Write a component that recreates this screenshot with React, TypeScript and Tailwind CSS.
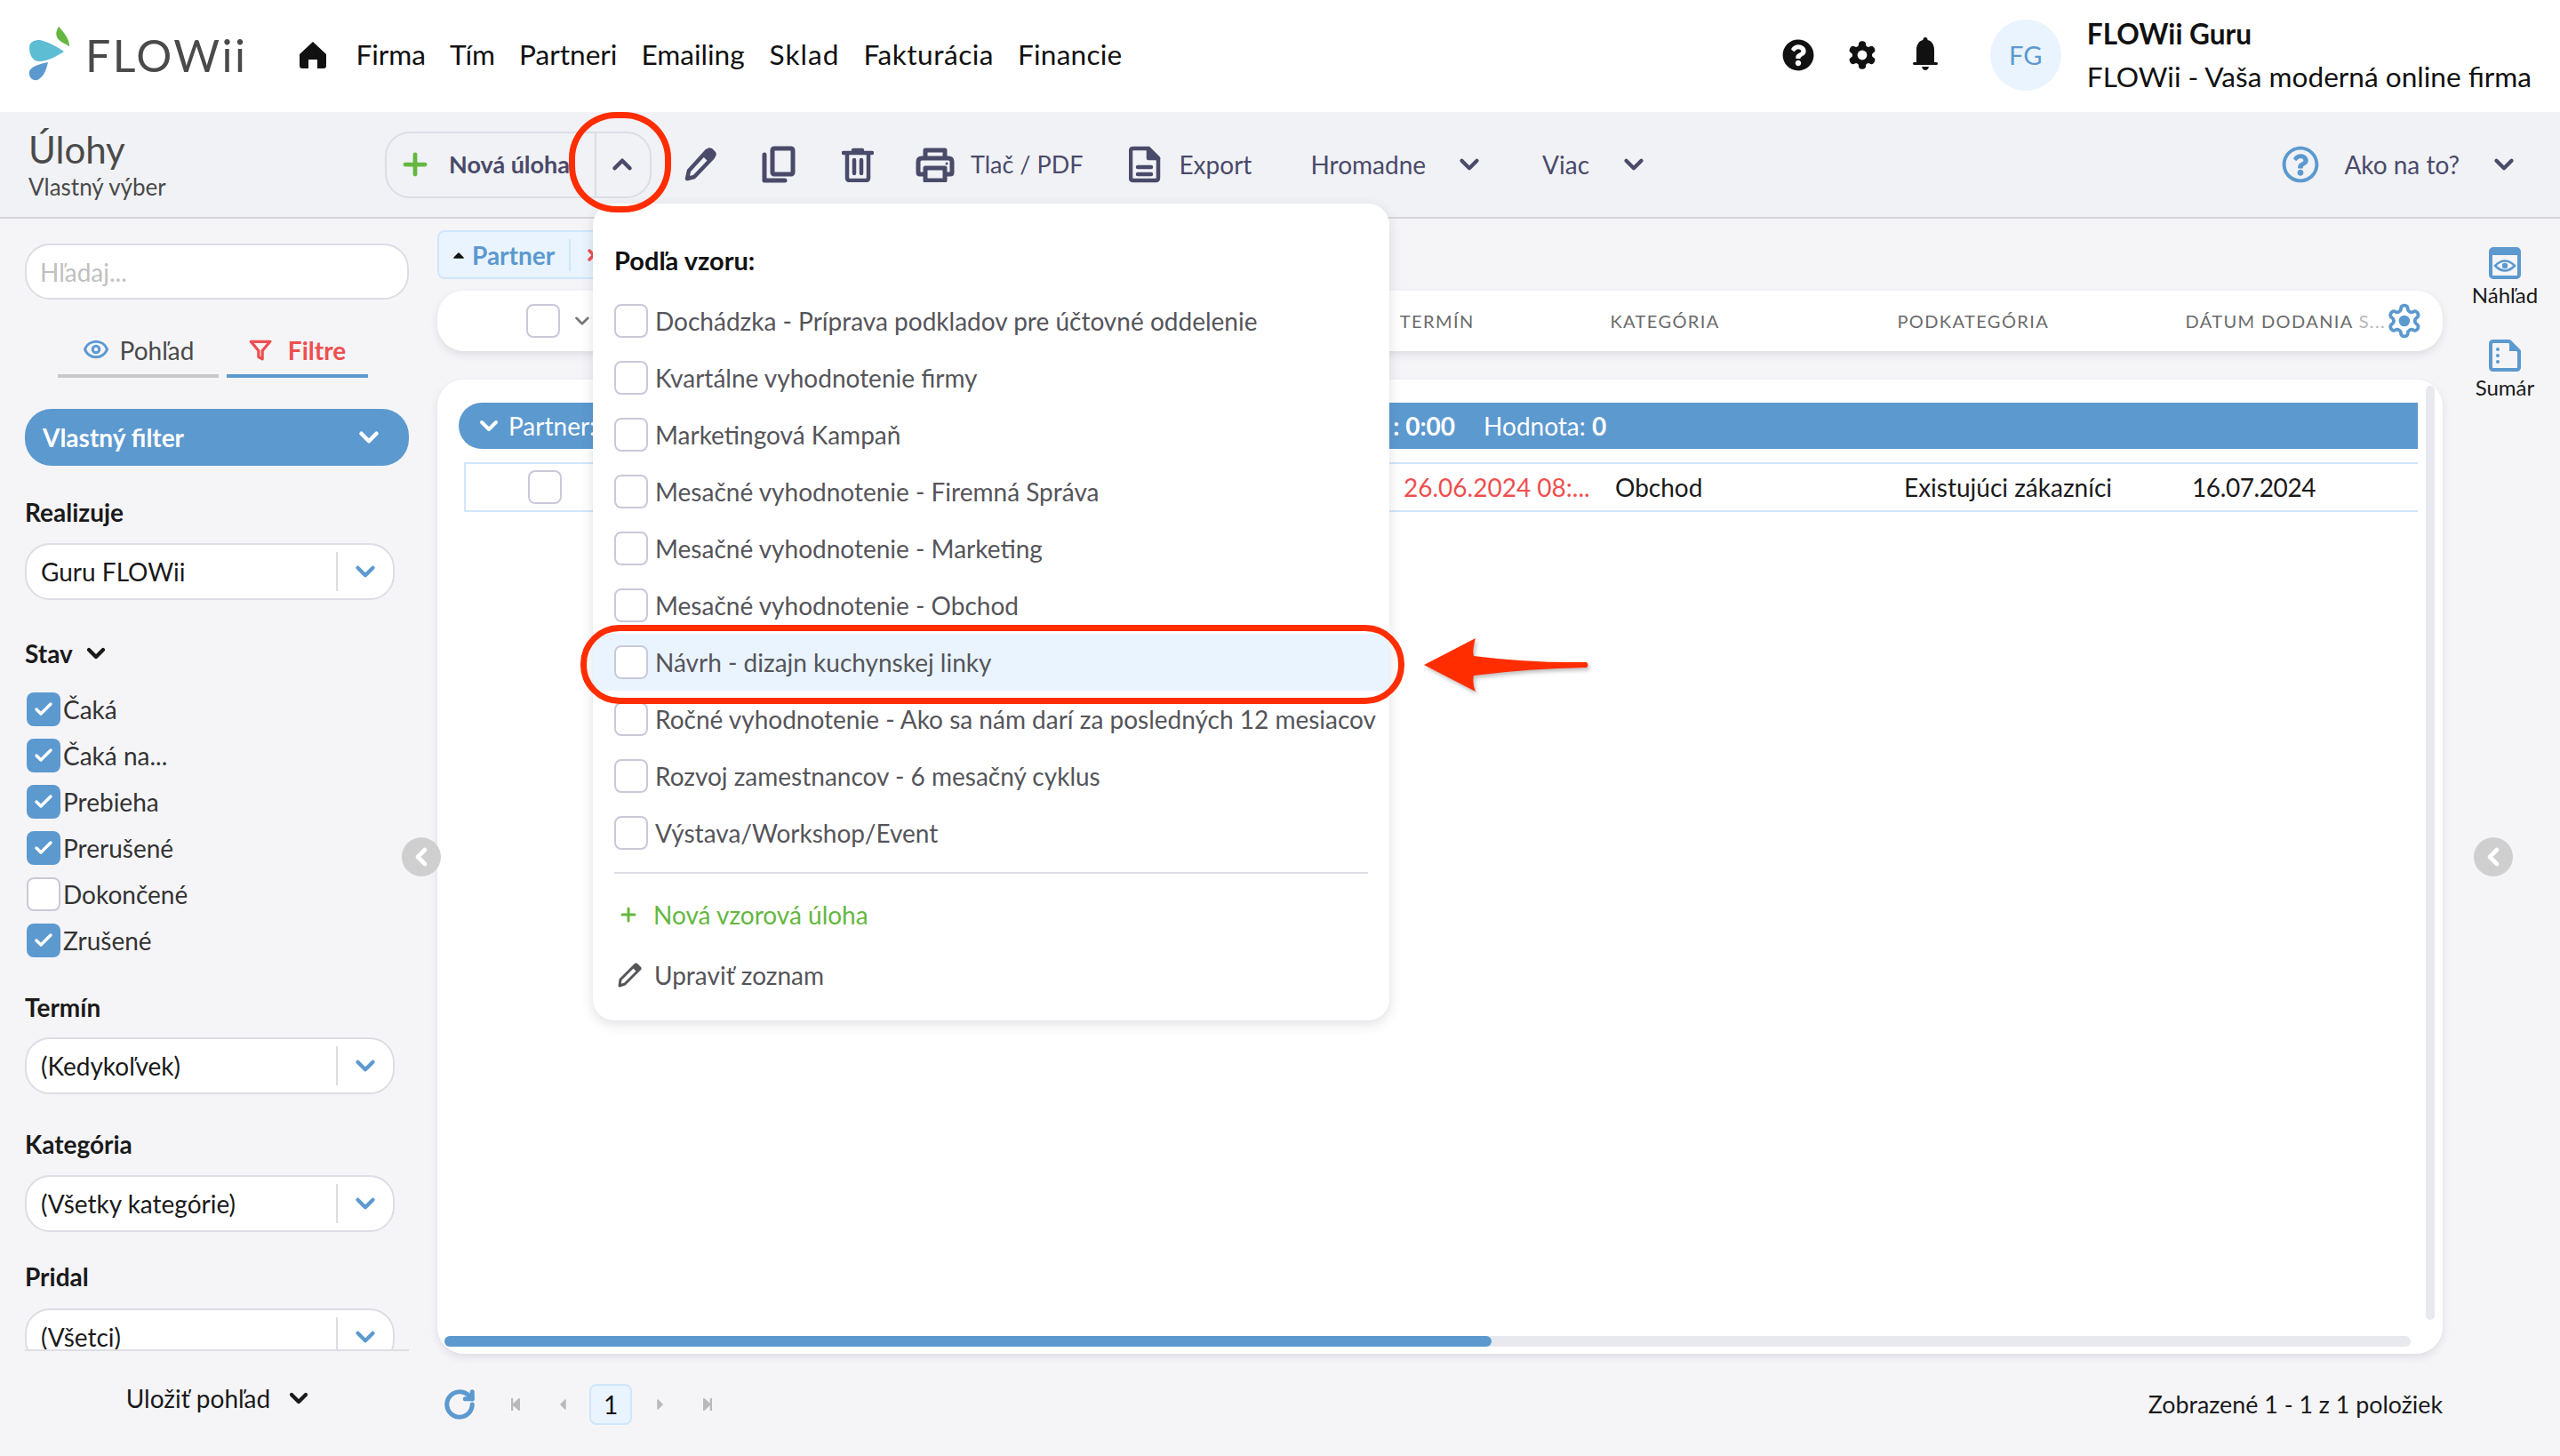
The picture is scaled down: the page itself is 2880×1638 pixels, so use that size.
import { ChevronDown, ChevronUp, ChevronLeft, Plus, Check, Eye, RotateCw } from 'lucide-react';
import { FaQuestionCircle, FaRegQuestionCircle, FaStepBackward, FaCaretLeft, FaCaretRight, FaStepForward, FaCaretUp, FaTimes } from 'react-icons/fa';
import { FiFilter } from 'react-icons/fi';

const statuses = [
  { label: 'Čaká', on: true },
  { label: 'Čaká na...', on: true },
  { label: 'Prebieha', on: true },
  { label: 'Prerušené', on: true },
  { label: 'Dokončené', on: false },
  { label: 'Zrušené', on: true },
];

const templates = [
  'Dochádzka - Príprava podkladov pre účtovné oddelenie',
  'Kvartálne vyhodnotenie firmy',
  'Marketingová Kampaň',
  'Mesačné vyhodnotenie - Firemná Správa',
  'Mesačné vyhodnotenie - Marketing',
  'Mesačné vyhodnotenie - Obchod',
  'Návrh - dizajn kuchynskej linky',
  'Ročné vyhodnotenie - Ako sa nám darí za posledných 12 mesiacov',
  'Rozvoj zamestnancov - 6 mesačný cyklus',
  'Výstava/Workshop/Event',
];

const nav = [
  { label: 'Firma', cls: '' },
  { label: 'Tím', cls: '' },
  { label: 'Partneri', cls: '' },
  { label: 'Emailing', cls: '' },
  { label: 'Sklad', cls: 'tracking-[1px] ml-[1px]' },
  { label: 'Fakturácia', cls: 'tracking-[0.5px]' },
  { label: 'Financie', cls: 'tracking-[0.2px]' },
];

const cogPath =
  'M12.22 2h-.44a2 2 0 0 0-2 2v.18a2 2 0 0 1-1 1.73l-.43.25a2 2 0 0 1-2 0l-.15-.08a2 2 0 0 0-2.73.73l-.22.38a2 2 0 0 0 .73 2.73l.15.1a2 2 0 0 1 1 1.72v.51a2 2 0 0 1-1 1.74l-.15.09a2 2 0 0 0-.73 2.73l.22.38a2 2 0 0 0 2.73.73l.15-.08a2 2 0 0 1 2 0l.43.25a2 2 0 0 1 1 1.73V20a2 2 0 0 0 2 2h.44a2 2 0 0 0 2-2v-.18a2 2 0 0 1 1-1.73l.43-.25a2 2 0 0 1 2 0l.15.08a2 2 0 0 0 2.73-.73l.22-.39a2 2 0 0 0-.73-2.73l-.15-.08a2 2 0 0 1-1-1.74v-.5a2 2 0 0 1 1-1.74l.15-.09a2 2 0 0 0 .73-2.73l-.22-.38a2 2 0 0 0-2.73-.73l-.15.08a2 2 0 0 1-2 0l-.43-.25a2 2 0 0 1-1-1.73V4a2 2 0 0 0-2-2z';

function Logo() {
  return (
    <div className="flex items-center gap-[14px]">
      <svg width="50" height="64" viewBox="0 0 50 64">
        <path d="M34 0C39 5 46 14 46 21C46 23 45 22 43 20C35 17 27 11 34 0Z" fill="#65b741" />
        <path d="M1 24C1 17 6 15 13 15C24 18 33 23 40 28C32 33 22 39 12 39C5 39 1 32 1 24Z" fill="#5dbdd3" />
        <path d="M22 40C20 48 18 56 10 60C3 61 0 56 1 50C4 44 13 42 22 40Z" fill="#5c99cf" />
      </svg>
      <span className="text-[50px] leading-none font-normal tracking-[2.5px] text-[#4a4a4a]">FLOWii</span>
    </div>
  );
}

function Box({ on = false }: { on?: boolean }) {
  if (on) {
    return (
      <span className="flex h-[38px] w-[38px] shrink-0 items-center justify-center rounded-[8px] bg-[#5c99cf]">
        <Check size={24} strokeWidth={3.5} className="text-white" />
      </span>
    );
  }
  return <span className="block h-[38px] w-[38px] shrink-0 rounded-[8px] border-2 border-[#c9c9da] bg-white" />;
}

function Select({ value }: { value: string }) {
  return (
    <div className="flex h-[64px] w-[416px] items-center rounded-[28px] border-2 border-[#dcdde5] bg-white pl-[16px] text-[28px] text-[#1a1a1a]">
      <span className="flex-1">{value}</span>
      <span className="flex h-[44px] w-[64px] items-center justify-center border-l-2 border-[#dcdde5]">
        <ChevronDown size={34} strokeWidth={3} className="text-[#5c99cf]" />
      </span>
    </div>
  );
}

function Label({ children }: { children: string }) {
  return <div className="text-[28px] leading-[32px] font-bold text-[#1a1a1a]">{children}</div>;
}

export default function App() {
  return (
    <div className="relative flex h-[1638px] w-[2880px] flex-col overflow-hidden bg-[#f5f5f8] font-['Lato',sans-serif] text-[#1a1a1a]">
      {/* Header */}
      <header className="flex h-[126px] shrink-0 items-center bg-white pb-[2px] pl-[32px] pr-[32px]">
        <Logo />
        <svg className="ml-[58px]" width="32" height="32" viewBox="0 0 32 32">
          <path d="M16 1L31 15V28Q31 31 28 31H21V21H11V31H4Q1 31 1 28V15Z" fill="#111" />
        </svg>
        <nav className="ml-[32px] flex gap-[27px] text-[31.6px] text-[#111]">
          {nav.map((n) => (
            <span key={n.label} className={n.cls}>{n.label}</span>
          ))}
        </nav>
        <div className="ml-auto flex items-center">
          <FaQuestionCircle size={36} className="text-[#111]" />
          <svg className="ml-[36px]" width="36" height="36" viewBox="0 0 24 24">
            <path d={cogPath} fill="#111" stroke="#111" strokeWidth="1" />
            <circle cx="12" cy="12" r="3.6" fill="#fff" />
          </svg>
          <svg className="ml-[39px]" width="28" height="40" viewBox="0 0 28 40" fill="#111">
            <path d="M14 0a2.5 2.5 0 0 1 2.5 3C21 4 24 8 24 14V28H4V14C4 8 7 4 11.5 3A2.5 2.5 0 0 1 14 0Z" />
            <rect x="0" y="28" width="28" height="3" rx="1.5" />
            <path d="M10 33H18Q17 37 14 37Q11 37 10 33Z" />
          </svg>
        </div>
        <div className="ml-[59px] flex h-[80px] w-[80px] items-center justify-center rounded-full bg-[#eaf4fe] text-[29px] text-[#5c99cf]">FG</div>
        <div className="ml-[29px] flex flex-col gap-[12px]">
          <div className="text-[31.6px] leading-[36px] font-bold text-[#111]">FLOWii Guru</div>
          <div className="text-[31.6px] leading-[36px] text-[#111]">FLOWii - Vaša moderná online firma</div>
        </div>
      </header>

      {/* Toolbar */}
      <div className="flex h-[120px] shrink-0 items-center border-b-2 border-[#d5d6da] bg-[#f1f2f5] pl-[32px] pr-[32px] text-[28px] text-[#4a4a6a]">
        <div className="w-[401px]">
          <div className="text-[42px] leading-[48px] text-[#4a4a4a]">Úlohy</div>
          <div className="mt-[2px] text-[26px] leading-[32px] text-[#4a4a4a]">Vlastný výber</div>
        </div>
        <div className="flex h-[75px] w-[300px] items-center rounded-[28px] border-2 border-[#dcdde5]">
          <Plus size={38} strokeWidth={3} className="ml-[13px] text-[#65b741]" />
          <span className="ml-[19px] w-[164px] text-[27px] font-bold whitespace-nowrap">Nová úloha</span>
          <span className="flex h-full flex-1 items-center justify-center border-l-2 border-[#dcdde5] pr-[3px]">
            <ChevronUp size={34} strokeWidth={3.2} />
          </span>
        </div>
        <svg className="ml-[36px]" width="38" height="40" viewBox="0 0 38 40" fill="none" stroke="#4a4a6a" strokeWidth="4.5" strokeLinejoin="round">
          <path d="M26 5L33 12L12 34L4 36L6 27Z" />
          <path d="M23 9L29 15L34 10Q35 8 34 7L31 4Q29 3 28 4Z" fill="#4a4a6a" />
        </svg>
        <svg className="ml-[50px]" width="38" height="42" viewBox="0 0 38 42" fill="none" stroke="#4a4a6a" strokeWidth="5" strokeLinejoin="round" strokeLinecap="round">
          <rect x="12" y="3" width="23" height="29" rx="2" />
          <path d="M3 10V39H26" />
        </svg>
        <svg className="ml-[52px]" width="36" height="40" viewBox="0 0 36 40" fill="none" stroke="#4a4a6a" strokeWidth="4.5" strokeLinecap="round" strokeLinejoin="round">
          <path d="M2 7H34M13 4H23M6 8V35Q6 38 9 38H27Q30 38 30 35V8M14 15V30M22 15V30" />
        </svg>
        <svg className="ml-[47px]" width="44" height="40" viewBox="0 0 44 40" fill="none" stroke="#4a4a6a" strokeWidth="5" strokeLinejoin="round">
          <path d="M11 13V4H33V13M11 31H5Q3 31 3 29V17Q3 13 7 13H37Q41 13 41 17V29Q41 31 39 31H33M11 24H33V38H11Z" />
          <circle cx="35" cy="19" r="1.5" fill="#4a4a6a" stroke="none" />
        </svg>
        <span className="ml-[18px] text-[27px]">Tlač / PDF</span>
        <svg className="ml-[52px]" width="36" height="42" viewBox="0 0 36 42" fill="none" stroke="#4a4a6a" strokeWidth="4.5" strokeLinejoin="round" strokeLinecap="round">
          <path d="M5 3H22L33 14V36Q33 39 30 39H5Q2 39 2 36V6Q2 3 5 3Z" />
          <path d="M22 3L33 14H22Z" fill="#4a4a6a" />
          <path d="M10 24H25M10 32H25" />
        </svg>
        <span className="ml-[20px]">Export</span>
        <span className="ml-[66px]">Hromadne</span>
        <ChevronDown size={34} strokeWidth={3} className="ml-[32px]" />
        <span className="ml-[65px]">Viac</span>
        <ChevronDown size={34} strokeWidth={3} className="ml-[33px]" />
        <FaRegQuestionCircle size={42} className="ml-auto text-[#5c99cf]" />
        <span className="ml-[28px]">Ako na to?</span>
        <ChevronDown size={34} strokeWidth={3} className="ml-[33px] mr-[14px]" />
      </div>

      {/* Body */}
      <div className="flex min-h-0 flex-1">
        {/* Sidebar */}
        <aside className="flex w-[492px] shrink-0 flex-col pl-[28px] pr-[32px] pt-[28px]">
          <div className="flex h-[63px] items-center rounded-[28px] border-2 border-[#dcdde5] bg-white pl-[15px] text-[28px] text-[#c0c0c0]">Hľadaj...</div>
          <div className="mt-[36px] ml-[37px] flex gap-[9px] text-[28px]">
            <div className="flex h-[52px] w-[181px] items-start justify-center gap-[12px] border-b-4 border-[#c8c8c8] text-[#4a4a4a]">
              <Eye size={30} strokeWidth={2.4} className="mt-[5px] text-[#5c99cf]" /> Pohľad
            </div>
            <div className="flex h-[52px] w-[159px] items-start justify-center gap-[18px] border-b-4 border-[#5c99cf] font-bold text-[#ee4f4f]">
              <FiFilter size={26} strokeWidth={3} className="mt-[8px]" /> Filtre
            </div>
          </div>
          <div className="mt-[35px] flex h-[64px] items-center justify-between rounded-[30px] bg-[#5c99cf] pl-[20px] pr-[28px] text-[28px] font-bold text-white">
            Vlastný filter
            <ChevronDown size={34} strokeWidth={3.2} />
          </div>
          <div className="mt-[36px]"><Label>Realizuje</Label></div>
          <div className="mt-[19px]"><Select value="Guru FLOWii" /></div>
          <div className="mt-[44px] flex items-center gap-[10px]">
            <Label>Stav</Label>
            <ChevronDown size={32} strokeWidth={3.2} />
          </div>
          <div className="ml-[2px] mt-[28px] flex flex-col gap-[14px]">
            {statuses.map((s) => (
              <div key={s.label} className="flex h-[38px] items-center gap-[3px] text-[28px] text-[#333]">
                <Box on={s.on} />
                {s.label}
              </div>
            ))}
          </div>
          <div className="mt-[40px]"><Label>Termín</Label></div>
          <div className="mt-[18px]"><Select value="(Kedykoľvek)" /></div>
          <div className="mt-[40px]"><Label>Kategória</Label></div>
          <div className="mt-[19px]"><Select value="(Všetky kategórie)" /></div>
          <div className="mt-[34px]"><Label>Pridal</Label></div>
          <div className="mt-[20px] h-[48px] overflow-hidden border-b-2 border-[#dcdde5]"><Select value="(Všetci)" /></div>
          <div className="ml-[24px] mt-[32px] flex items-center justify-center gap-[16px] pr-[18px] text-[28px] text-[#1a1a1a]">
            Uložiť pohľad
            <ChevronDown size={32} strokeWidth={3.2} />
          </div>
        </aside>

        {/* Main */}
        <main className="flex w-[2256px] shrink-0 flex-col pt-[13px]">
          <div className="flex h-[55px] w-[200px] items-center rounded-[8px] border-2 border-[#cfe6fb] bg-[#e9f4fe] pl-[12px] text-[28px] font-bold text-[#5c99cf]">
            <FaCaretUp size={20} className="text-[#111]" />
            <span className="ml-[5px]">Partner</span>
            <span className="ml-[16px] h-[36px] border-l-2 border-[#cfe6fb]" />
            <FaTimes size={20} className="ml-[16px] text-[#ee4f4f]" />
          </div>
          <div className="mt-[13px] flex h-[68px] items-center rounded-[30px] bg-white pl-[100px] text-[20px] tracking-[1.4px] whitespace-nowrap text-[#6b6b6b] shadow-[0_4px_8px_rgba(60,60,90,0.12)]">
            <Box />
            <ChevronDown size={26} strokeWidth={2.4} className="ml-[12px] text-[#777]" />
            <span className="ml-[907px] w-[238px]">TERMÍN</span>
            <span className="w-[325px]">KATEGÓRIA</span>
            <span className="w-[326px]">PODKATEGÓRIA</span>
            <span>DÁTUM DODANIA <span className="text-[#b5b5b5]">S...</span></span>
            <svg className="ml-auto mr-[22px]" width="42" height="42" viewBox="0 0 24 24" fill="none" stroke="#5c99cf" strokeWidth="2.2">
              <path d={cogPath} />
              <circle cx="12" cy="12" r="3.6" fill="#5c99cf" stroke="none" />
            </svg>
          </div>
          <div className="relative mt-[32px] flex h-[1096px] flex-col rounded-[30px] bg-white pl-[24px] pr-[28px] pt-[26px] shadow-[0_4px_8px_rgba(60,60,90,0.12)]">
            <div className="flex h-[52px] items-center rounded-l-[26px] bg-[#5c99cf] pl-[18px] text-[28px] text-white">
              <ChevronDown size={32} strokeWidth={3} />
              <span className="ml-[6px]">Partner:</span>
              <span className="ml-[897px] font-bold">: 0:00</span>
              <span className="ml-[32px]">Hodnota: <b>0</b></span>
            </div>
            <div className="ml-[6px] mt-[15px] flex h-[56px] items-center border-2 border-r-0 border-[#d0e7fb] pl-[70px] text-[28px]">
              <Box />
              <span className="ml-[947px] w-[238px] text-[#ee4f4f]">26.06.2024 08:...</span>
              <span className="w-[325px]">Obchod</span>
              <span className="w-[324px]">Existujúci zákazníci</span>
              <span className="tracking-[-0.4px]">16.07.2024</span>
            </div>
            <div className="mt-auto mb-[8px] ml-[-16px] mr-[8px] h-[12px] rounded-full bg-[#e8e9ee]">
              <div className="h-full w-[1178px] rounded-full bg-[#5c99cf]" />
            </div>
            <div className="absolute right-[9px] top-[7px] bottom-[38px] w-[10px] rounded-full bg-[#e8e9ee]" />
          </div>
          <div className="mt-[34px] flex items-center text-[#b9b9b9]">
            <RotateCw size={38} strokeWidth={3.2} className="ml-[6px] text-[#5c99cf]" />
            <FaStepBackward size={16} className="ml-[36px]" />
            <FaCaretLeft size={20} className="ml-[35px]" />
            <span className="ml-[20px] flex h-[46px] w-[48px] items-center justify-center rounded-[8px] border-2 border-[#cfe6fb] bg-[#e9f4fe] text-[28px] text-[#111]">1</span>
            <FaCaretRight size={20} className="ml-[22px]" />
            <FaStepForward size={16} className="ml-[35px]" />
            <span className="ml-auto text-[26.8px] text-[#1a1a1a]">Zobrazené 1 - 1 z 1 položiek</span>
          </div>
        </main>

        {/* Right rail */}
        <aside className="flex flex-1 flex-col items-center gap-[36px] pl-[8px] pt-[32px] text-[24px] leading-[28px] text-[#1a1a1a]">
          <div className="flex flex-col items-center gap-[4px]">
            <svg width="36" height="36" viewBox="0 0 36 36" fill="none">
              <rect x="2" y="2" width="32" height="32" rx="3" stroke="#5c99cf" strokeWidth="4" />
              <rect x="2" y="2" width="32" height="7" fill="#5c99cf" />
              <path d="M7 21Q18 10 29 21Q18 32 7 21Z" stroke="#5c99cf" strokeWidth="2.5" />
              <circle cx="18" cy="21" r="3.2" fill="#5c99cf" />
            </svg>
            Náhľad
          </div>
          <div className="flex flex-col items-center gap-[4px]">
            <svg width="36" height="36" viewBox="0 0 36 36" fill="none">
              <path d="M5 2H23L34 13V31Q34 34 31 34H5Q2 34 2 31V5Q2 2 5 2Z" stroke="#5c99cf" strokeWidth="4" strokeLinejoin="round" />
              <path d="M23 2L34 13H23Z" fill="#5c99cf" />
              <circle cx="10" cy="11" r="2" fill="#5c99cf" />
              <circle cx="10" cy="18" r="2" fill="#5c99cf" />
              <circle cx="10" cy="25" r="2" fill="#5c99cf" />
            </svg>
            Sumár
          </div>
        </aside>
      </div>

      {/* Collapse handles */}
      <div className="absolute left-[452px] top-[942px] flex h-[44px] w-[44px] items-center justify-center rounded-full bg-[#cfcfcf]">
        <ChevronLeft size={32} strokeWidth={3.5} className="text-white" />
      </div>
      <div className="absolute left-[2783px] top-[942px] flex h-[44px] w-[44px] items-center justify-center rounded-full bg-[#cfcfcf]">
        <ChevronLeft size={32} strokeWidth={3.5} className="text-white" />
      </div>

      {/* Template dropdown */}
      <div className="absolute left-[667px] top-[229px] h-[919px] w-[896px] rounded-[24px] bg-white pt-[46px] text-[28px] text-[#55555a] shadow-[0_4px_14px_rgba(60,60,90,0.16)]">
        <div className="pl-[24px] text-[29px] leading-[36px] font-bold text-[#111]">Podľa vzoru:</div>
        <div className="mt-[18px]">
          {templates.map((t) => (
            <div key={t} className={`flex h-[64px] items-center gap-[8px] pl-[24px] whitespace-nowrap ${t.startsWith('Návrh') ? 'bg-[#eaf4fe]' : ''}`}>
              <Box />
              {t}
            </div>
          ))}
        </div>
        <div className="mx-[24px] mt-[12px] border-t-2 border-[#dcdde5]" />
        <div className="mt-[25px] flex items-center gap-[16px] pl-[28px] text-[#65b741]">
          <Plus size={24} strokeWidth={3} /> Nová vzorová úloha
        </div>
        <div className="mt-[26px] flex items-center gap-[14px] pl-[27px]">
          <svg width="28" height="28" viewBox="0 0 28 28" fill="none" stroke="#55555a" strokeWidth="3" strokeLinejoin="round">
            <path d="M21 2L26 7L9 24L3 26L4 19Z" />
            <path d="M19 5L23 9L26 6L22 2Z" fill="#55555a" />
          </svg>
          Upraviť zoznam
        </div>
      </div>

      {/* Annotations */}
      <div className="absolute left-[640px] top-[126px] h-[113px] w-[115px] rounded-[46%] border-[7px] border-[#ff2d00]" />
      <div className="absolute left-[653px] top-[703px] h-[89px] w-[927px] rounded-[44px] border-[7px] border-[#ff2d00]" />
      <svg className="absolute left-[1600px] top-[716px] drop-shadow-[2px_3px_2px_rgba(0,0,0,0.25)]" width="190" height="64" viewBox="0 0 190 64">
        <path d="M2 32L60 2Q56 16 58 22Q120 30 185 29Q188 32 185 35Q120 36 58 44Q56 52 60 62Z" fill="#ff2d00" />
      </svg>
    </div>
  );
}
